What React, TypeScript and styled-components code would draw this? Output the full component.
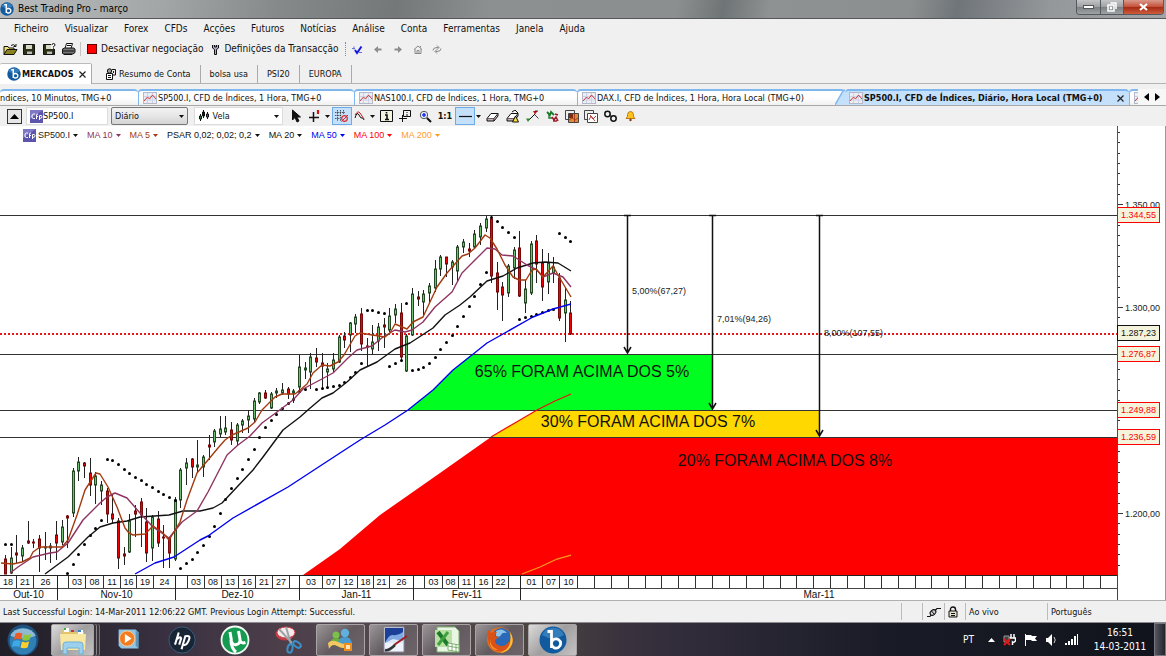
import React from 'react';
import styled, { createGlobalStyle, css } from 'styled-components';

const ui = '"DejaVu Sans Condensed", "DejaVu Sans", "Noto Sans", sans-serif';
const plain = '"Liberation Sans", Arial, sans-serif';

const GlobalStyle = createGlobalStyle`
  * { box-sizing: border-box; }
  body { margin: 0; background: #f0f0f0; font: 10px/12px ${ui}; color: #111; }
  button, input, select { font: inherit; color: inherit; margin: 0; padding: 0; border: 0; background: none; }
  svg { display: block; flex: none; }
`;

/* ---------- window frame ---------- */

const Window = styled.div`
  display: flex;
  flex-direction: column;
  min-height: 100vh;
  overflow: hidden;
  white-space: nowrap;
`;

const TitleBar = styled.header`
  display: flex;
  align-items: center;
  gap: 4px;
  height: 19px;
  background: linear-gradient(100deg, #b9bcbc 0%, #a3a6a6 14%, #868989 24%, #747878 34%, #8c9090 42%, #8b8f8f 58%, #6f7476 62%, #8e9292 66%, #8b8f8f 78%, #70757a 82%, #94989a 90%, #a2a5a6 100%);
  border-bottom: 1px solid #55585a;
`;

const Title = styled.h1`
  flex: 1;
  margin: 0;
  font-size: 10px;
  font-weight: normal;
  color: #000;
`;

const WindowButtons = styled.div`
  display: flex;
  align-self: flex-start;
  height: 15px;
  margin-right: 2px;
  border: 1px solid #55585c;
  border-top: 0;
  border-radius: 0 0 4px 4px;
  overflow: hidden;
`;

const WindowButton = styled.button<{ $close?: boolean }>`
  display: flex;
  align-items: center;
  justify-content: center;
  width: ${p => (p.$close ? 40 : 23)}px;
  background: ${p => (p.$close
    ? 'linear-gradient(#d99a8c, #c4513a 48%, #a52a14 52%, #cf5c3c)'
    : 'linear-gradient(#c2c4c6, #9fa2a4 48%, #7c8082 52%, #a0a3a5)')};
  & + & { border-left: 1px solid #55585c; }
`;

const MenuBar = styled.nav`
  display: flex;
  align-items: center;
  gap: 16px;
  height: 19px;
  padding-left: 14px;
`;

const MenuItem = styled.button``;

const ToolBar = styled.div`
  display: flex;
  align-items: center;
  height: 22px;
  padding-left: 2px;
`;

const ToolButton = styled.button<{ $width?: number; $on?: boolean }>`
  display: flex;
  align-items: center;
  justify-content: center;
  flex: none;
  gap: 4px;
  height: 18px;
  width: ${p => (p.$width ? `${p.$width}px` : 'auto')};
  ${p => p.$on && css`
    background: #c4e0fb;
    border: 1px solid #6cabe8;
  `}
`;

const Group = styled.div<{ $before?: number }>`
  display: flex;
  align-items: center;
  flex: none;
  margin-left: ${p => p.$before ?? 0}px;
`;

const Divider = styled.span<{ $dotted?: boolean }>`
  flex: none;
  width: 1px;
  height: 14px;
  margin: 0 6px 0 2px;
  border-left: 1px ${p => (p.$dotted ? 'dotted #888' : 'solid #c4c4c4')};
`;

/* ---------- workspace tabs ---------- */

const WorkspaceTabs = styled.div`
  display: flex;
  align-items: flex-end;
  height: 24px;
  border-bottom: 1px solid #b4b4b4;
`;

const WorkspaceTab = styled.button<{ $active?: boolean }>`
  display: flex;
  align-items: center;
  gap: 3px;
  height: 18px;
  padding: 0 9px;
  border-right: 1px solid #aaa;
  font-size: 9px;
  ${p => p.$active && css`
    gap: 1px;
    min-width: 92px;
    height: 21px;
    margin: 0 4px -1px 0;
    padding: 0 5px 0 7px;
    background: #fff;
    border-top: 1px solid #bbb;
    border-radius: 2px 2px 0 0;
    font-weight: bold;
  `}
`;

/* ---------- chart tabs ---------- */

const ChartTabs = styled.div`
  display: flex;
  align-items: stretch;
  height: 17px;
  margin-top: 5px;
  border-bottom: 1px solid #a8a8a8;
`;

const TabStrip = styled.div`
  display: flex;
  flex: 1;
  min-width: 0;
  overflow: hidden;
`;

const ChartTab = styled.button<{ $width: number; $active?: boolean; $first?: boolean }>`
  display: flex;
  align-items: center;
  flex: none;
  gap: 1px;
  width: ${p => p.$width}px;
  padding-left: ${p => (p.$first ? 0 : 4)}px;
  border: solid #7fb8ee;
  border-width: 2px 0 0 ${p => (p.$first ? 0 : 1)}px;
  border-radius: 4px 4px 0 0;
  background: linear-gradient(#fff, #fff 50%, #f0f0f0);
  font-size: 9px;
  ${p => p.$active && css`
    padding: 0 5px 0 4px;
    border-left-width: 0;
    background: #c4e0fb;
    font-weight: bold;
  `}
`;

const Slope = styled.svg`
  margin-left: -10px;
`;

const CloseMark = styled.span`
  display: flex;
  margin-left: auto;
`;

const TabScroller = styled.div`
  display: flex;
  align-items: center;
  justify-content: space-evenly;
  width: 28px;
  background: #f7f7f7;
`;

/* ---------- chart toolbar fields ---------- */

const ChartToolBar = styled.div`
  display: flex;
  align-items: center;
  height: 20px;
  padding-left: 7px;
  font-size: 10px;
`;

const CollapseButton = styled.button`
  display: flex;
  align-items: center;
  justify-content: center;
  flex: none;
  width: 15px;
  height: 15px;
  margin-right: 4px;
  border: 1px solid #333;
  background: #e6e6e6;
`;

const Field = styled.label<{ $width: number; $raised?: boolean }>`
  display: flex;
  align-items: center;
  flex: none;
  width: ${p => p.$width}px;
  height: 18px;
  padding: 0 3px;
  font-size: 9px;
  border: 1px solid ${p => (p.$raised ? '#777' : '#dcdcdc')};
  border-radius: ${p => (p.$raised ? 2 : 0)}px;
  background: ${p => (p.$raised ? 'linear-gradient(#f2f2f2, #e6e6e6 50%, #d4d4d4)' : '#fff')};
`;

const FieldInput = styled.input`
  flex: 1;
  min-width: 0;
`;

const FieldSelect = styled.select`
  flex: 1;
  min-width: 0;
  appearance: none;
`;

/* ---------- chart ---------- */

const ChartPanel = styled.main`
  position: relative;
  flex: 1 0 auto;
  border-right: 1px solid #999;
  border-bottom: 1px solid #b0b0b0;
  background: #fff;
  font-family: ${plain};
`;

const Legend = styled.div`
  position: absolute;
  top: 2px;
  left: 23px;
  display: flex;
  align-items: center;
  gap: 9px;
  height: 14px;
  font-size: 9px;
`;

const LegendItem = styled.button<{ $color: string }>`
  display: flex;
  align-items: center;
  gap: 3px;
  color: ${p => p.$color};
`;

const LegendSymbol = styled.span`
  display: flex;
  align-items: center;
  gap: 2px;
`;

const PlotRow = styled.div`
  display: flex;
`;

const Plot = styled.svg`
  flex: 1;
  min-width: 0;
  height: 449px;
`;

const PriceAxis = styled.svg`
  width: 48px;
  height: 449px;
  font-size: 9px;
`;

const TimeAxis = styled.div`
  display: flex;
  height: 25px;
  margin-right: 47px;
  border-top: 1px solid #222;
  border-right: 1px solid #444;
`;

const Month = styled.div<{ $width?: number }>`
  display: flex;
  flex-direction: column;
  flex: ${p => (p.$width ? `0 0 ${p.$width}px` : '1 1 0')};
  min-width: 0;
  & + & { border-left: 1px solid #222; }
`;

const Weeks = styled.div`
  display: flex;
  height: 13px;
  border-bottom: 1px solid #444;
  font-size: 9px;
`;

const Week = styled.span<{ $width?: number }>`
  flex: ${p => (p.$width ? `0 0 ${p.$width}px` : '1 1 0')};
  text-align: center;
  & + & { border-left: 1px solid #333; }
`;

const MonthName = styled.span`
  text-align: center;
`;

/* ---------- status bar and task bar ---------- */

const StatusBar = styled.footer`
  display: flex;
  align-items: center;
  height: 21px;
  font-size: 9px;
`;

const StatusCell = styled.div<{ $width?: number }>`
  display: flex;
  align-items: center;
  flex: ${p => (p.$width ? `0 0 ${p.$width}px` : '1 1 0')};
  height: 17px;
  padding-left: 3px;
  & + & { border-left: 1px solid #bbb; }
`;

const TaskBar = styled.nav`
  display: flex;
  align-items: center;
  height: 34px;
  padding-left: 3px;
  background: linear-gradient(90deg, #201e26 0%, #383040 14%, #4c3f4a 24%, #55484f 34%, #4a4440 46%, #38313e 54%, #2a2735 64%, #191b26 76%, #11131c 100%);
  border-top: 1px solid #8d8a90;
  color: #fff;
`;

const TaskButton = styled.button<{ $state?: 'open' | 'active'; $stacked?: boolean }>`
  display: flex;
  align-items: center;
  justify-content: center;
  flex: none;
  width: 49px;
  height: 32px;
  margin-right: 4px;
  border: 1px solid transparent;
  border-radius: 2px;
  ${p => p.$state && css`
    border-color: #a8a4a6;
    background: ${p.$state === 'active'
      ? 'linear-gradient(135deg, #dcdcdc, #a19ea0 50%, #c4c2c2)'
      : 'linear-gradient(135deg, #9b9598, #625a5e 50%, #6c6468)'};
  `}
  ${p => p.$stacked && css`
    width: 43px;
    margin-right: 10px;
    box-shadow: 2px 0 #3a343c, 3px 0 #8c868c, 5px 0 #3a343c, 6px 0 #787278;
  `}
`;

const StartButton = styled.button`
  margin-right: 9px;
  width: 39px;
  display: flex;
  justify-content: center;
`;

const Tray = styled.div`
  display: flex;
  align-items: center;
  gap: 8px;
  margin-left: auto;
`;

const Language = styled.span`
  margin-right: 6px;
`;

const Clock = styled.time`
  width: 68px;
  line-height: 14px;
  text-align: center;
`;

const ShowDesktop = styled.button`
  width: 12px;
  height: 33px;
  border: 1px solid #77777f;
  background: linear-gradient(90deg, #55565e, #22242c);
`;

/* ---------- icons ---------- */

const Caret = ({ color = '#111' }: { color?: string }) => (
  <svg width="5" height="3" viewBox="0 0 5 3"><path d="M0 0h5L2.500 3z" fill={color} /></svg>
);

const BrandMark = ({ size = 13 }: { size?: number }) => (
  <svg width={size} height={size} viewBox="0 0 28 28">
    <circle cx="14" cy="14" r="13.500" fill="#125a9e" />
    <path d="M3 9a12 12 0 0 1 22 0q-11 7-22 0z" fill="#4a94cf" opacity=".6" />
    <path d="M8.500 5.500h4V22M12.500 17a4.600 4.600 0 1 1 0 1" fill="none" stroke="#fff" strokeWidth="2.800" />
  </svg>
);

const CfdMark = () => (
  <svg width="13" height="13" viewBox="0 0 13 13">
    <path d="M0 0h13v13H0z" fill="#5d54ab" />
    <path d="M0 0h13L0 9z" fill="#7f78c4" />
    <path d="M5 4H3.500Q2 4 2 6v1q0 1.500 1.500 1.500H5M6.500 9V5q0-1 1.500-1M6 6.500h2M9.500 10V5.500q2.500-.7 2.500 1.300t-2.500 1.500" fill="none" stroke="#fff" />
  </svg>
);

const ChartMark = () => (
  <svg width="14" height="12" viewBox="0 0 14 12">
    <rect x=".5" y=".5" width="13" height="11" fill="#eceef6" stroke="#b4b8c8" />
    <path d="M4.500 1v10M9.500 1v10M1 4.500h12M1 8h12" stroke="#cdd2e4" />
    <path d="M1 9l3.500-4 2 2 3-4 3.500 4" fill="none" stroke="#d03838" />
  </svg>
);

const Cross = () => (
  <svg width="7" height="7" viewBox="0 0 7 7"><path d="M.5.5l6 6M6.500.5l-6 6" stroke="#222" strokeWidth="1.200" /></svg>
);

const Art = ({ w = 13, h = 13, children }: { w?: number; h?: number; children: React.ReactNode }) => (
  <svg width={w} height={h} viewBox={`0 0 ${w} ${h}`} fill="none" stroke="#111">{children}</svg>
);

const OpenIcon = () => (
  <Art w={15} h={13}>
    <path d="M1 11.500v-8h4l1 1.500h5v2" fill="#f3e36a" />
    <path d="M1 11.500l3-5h10l-3 5z" fill="#8a8420" />
    <path d="M8 2.500q2.500-2 4.500.5m.5-2v2.500h-2.500" />
  </Art>
);
const SaveIcon = ({ ask }: { ask?: boolean }) => (
  <Art>
    <path d="M.5 1.500h11v10H.5z" fill="#2b2f14" />
    <path d="M3 2h6v4H3z" fill="#d8d8c8" stroke="none" />
    <path d="M4 8.500h5V11H4z" fill="#bbb" stroke="none" />
    {ask && <><path d="M8 0h5v6H8z" fill="#f0f0f0" stroke="none" /><path d="M9 2q0-1.500 1.500-1.500T12 2q0 1-1.500 1.500v1m0 .8v1" /></>}
  </Art>
);
const PrintIcon = () => (
  <Art w={15} h={13}>
    <path d="M4 5.500l1.500-5h6l-1.500 5z" fill="#fff" />
    <path d="M1.500 6l2-1h9l1.500 1v3.500l-2 1.500h-10l-.5-1z" fill="#777" />
    <path d="M2 8h11M3 11.500h8M6 2.500h4" />
  </Art>
);
const WrenchIcon = () => (
  <Art w={9} h={11}><path d="M1.500 1v3l2 1.500v5h2v-5l2-1.500V1M3.500 1v2h2V1" fill="#b7a3c9" /></Art>
);
const CheckIcon = () => (
  <Art w={11} h={11}>
    <path d="M3 6L5 9l4.500-6.500" stroke="#1616e0" strokeWidth="2" />
    <path d="M0 4.500h3M2 2.500v3M7 8.500h3" stroke="#6670dd" />
  </Art>
);
const ArrowIcon = ({ back }: { back?: boolean }) => (
  <Art w={9} h={9}>
    <path d={back ? 'M0 4.500L4 1v2.500h3.500v2H4V8z' : 'M8 4.500L4 1v2.500H.5v2H4V8z'} fill="#8c8c8c" stroke="none" />
  </Art>
);
const HomeIcon = () => (
  <Art w={10} h={9}><path d="M1 4.500l4-3.500 4 3.500M2 4v4.500h6V4M4 8.500v-3h2v3M7.500 2.500V1" stroke="#888" /></Art>
);
const RefreshIcon = () => (
  <Art w={10} h={9}><path d="M1 5.500q0-3 4-3h1.500M5 .5l2 2-2 2M9 3.500q0 3-4 3H3.500M5 4.500l-2 2 2 2" stroke="#888" /></Art>
);
const PeopleIcon = () => (
  <Art w={11} h={12}>
    <circle cx="4.500" cy="3" r="2.200" fill="#999" />
    <path d="M1.500 5.500h6v6h-6zM3 7.500h3M3 9.500h3" fill="#fff" />
    <path d="M7 1.500h3.500V7H8M8.500 3v2" />
  </Art>
);
const CandlesIcon = () => (
  <Art w={12} h={12}>
    <path d="M2.500 4v7M5.500 0v8M9.500 2v7" />
    <path d="M1.500 6h2v3h-2zM8.500 4h2v3h-2z" fill="#2c8a35" />
    <path d="M4.500 2h2v4h-2z" fill="#111" />
  </Art>
);
const CursorIcon = () => (
  <Art w={11} h={14}><path d="M1.500 1v10l2.500-2.500 2 4.500 2-1-2-4h3.500z" fill="#111" /></Art>
);
const CrosshairIcon = () => (
  <Art><path d="M5.500 2v10M1 7.500h10" strokeWidth="1.500" /><path d="M10 0v4" stroke="#d01818" strokeWidth="2.200" /></Art>
);
const GridIcon = () => (
  <Art w={14}>
    <path d="M0 2.500h10M0 5.500h6M0 8.500h5M2.500 0v11M5.500 0v11M8.500 0v4" stroke="#333" strokeWidth=".8" strokeDasharray="1.500 .8" />
    <circle cx="9.500" cy="8.500" r="2.800" stroke="#e02828" strokeWidth="1.200" /><path d="M6.500 11.500l6.500-6.500" stroke="#e02828" />
  </Art>
);
const WaveIcon = () => (
  <Art w={12}><path d="M1 8Q3 1 5 5t3 3 2 2" /><path d="M1 5q3-5 5-2t4 6" stroke="#d02020" /></Art>
);
const InfoIcon = () => (
  <Art w={13} h={12}><path d="M.5.500h12v11H.5z" fill="#f4f4e0" /><path d="M6.500 2v1.500M5 5h2v4M5 9.500h4" strokeWidth="1.600" /></Art>
);
const AddNoteIcon = () => (
  <Art><path d="M4.500.5h7v6h-7zM0 8.500h8M3.500 5v7" /><path d="M8 2v1M8 4v2" /></Art>
);
const ZoomIcon = () => (
  <Art><circle cx="5" cy="5" r="3.700" fill="#e8ecff" stroke="#555" /><path d="M8 8l4 4" strokeWidth="2" /><path d="M3 5h4M5 3v4" stroke="#2233ee" strokeWidth="1.600" /></Art>
);
const LineIcon = () => <Art><path d="M0 6.500h13" strokeWidth="1.200" /></Art>;
const EraserIcon = ({ all }: { all?: boolean }) => (
  <Art>
    <path d="M1 8.500l4-5h7l-4 5z" fill="#fff" /><path d="M1 8.500v2.500h7V8.500M8 11l4-5V3.500" fill="#c9b0b8" />
    {all && <><path d="M6 2l3-2 3 3" /><path d="M9.500 6l3 6h-6z" fill="#ffe23c" /></>}
  </Art>
);
const TrendIcon = () => (
  <Art>
    <path d="M3 10l6-6" />
    <path d="M0 8.500h4.500L2 12z" fill="#2c8a35" stroke="none" />
    <path d="M7 1h4.500L9 4.500z" fill="#c01818" stroke="none" />
    <path d="M9 5l3.500 3.500M9 1l3 0" strokeWidth=".8" />
  </Art>
);
const IndicatorsIcon = () => (
  <Art>
    <path d="M1 2l3 3 1-3 3 3" stroke="#1c7a2c" strokeWidth="1.800" />
    <path d="M3 3v5h3" stroke="#1c7a2c" strokeWidth="1.400" />
    <path d="M6 7l2 3 2-3 2 4M7 11h4M9 4l3 1" stroke="#a01c28" strokeWidth="1.500" />
  </Art>
);
const CopyIcon = ({ image }: { image?: boolean }) => (
  <Art w={14} h={13}>
    <path d="M.5.5h9v9h-9z" fill="#eee" stroke="#444" />
    <path d="M3.500 3.500h10v9h-10z" fill={image ? '#e08a3c' : '#fff'} stroke="#444" />
    {image
      ? <><path d="M4 4h4v4H4z" fill="#7a2c14" stroke="none" /><path d="M4 10l3-2 3 2 3-2M9.500 4v8" stroke="#a8401c" /></>
      : <path d="M5 10l2-4 2 3 3-3M6 5l5 6" stroke="#b83838" />}
  </Art>
);
const LinkIcon = () => <Art><circle cx="3.500" cy="4" r="2.700" strokeWidth="1.500" /><circle cx="9.500" cy="8.500" r="2.700" strokeWidth="1.500" /><path d="M5 5l3 2" /></Art>;
const BellIcon = () => <Art w={11} h={12}><path d="M1 8.500q2-1.500 1.500-4Q3 1.500 5.500 1.500t3 3q-.5 2.500 1.500 4z" fill="#ffc21c" stroke="#b87c14" /><circle cx="5.500" cy="10" r="1.200" fill="#8c3c10" stroke="none" /></Art>;
const Ratio = styled.span`
  font-size: 9px;
  font-weight: bold;
`;
const PlugIcon = () => <Art w={15} h={12}><path d="M1 10.500h3l1.500-2M9 4.500l2-2h4" strokeWidth="1.200" /><ellipse cx="7" cy="6.500" rx="3.200" ry="2.300" fill="#ccc" transform="rotate(-40 7 6.500)" /><path d="M5.500 5l3 3.500" /></Art>;
const LockIcon = () => <Art w={10} h={12}><path d="M2.500 5V3.500Q2.500 1 5 1t2.500 2.500V5" strokeWidth="1.400" /><path d="M1 5h8v6H1zM3 7.500h4M3 9.500h4" fill="#e6e6d0" /></Art>;

/* ---------- task bar pictures ---------- */

const Big = ({ children, size = 30 }: { children: React.ReactNode; size?: number }) => (
  <svg width={size} height={size} viewBox="0 0 30 30">{children}</svg>
);
const StartArt = () => (
  <Big size={32}>
    <circle cx="15" cy="15" r="14.500" fill="#1d4f7c" />
    <circle cx="15" cy="16" r="12.500" fill="#2f7fb4" />
    <path d="M3 11a13 11 0 0 1 24 0q-12 5-24 0z" fill="#a9c9dc" opacity=".8" />
    <path d="M8 9q3-1.500 6.500 0l-1.300 5.500Q10 13 6.500 14.500z" fill="#ee5a24" />
    <path d="M15.800 9.500q3 1.500 7 0L21 15q-3.500 1.500-6.700 0z" fill="#8cc63a" />
    <path d="M6 16q3.500-1.500 6.800 0l-1.300 5.500q-3.500-1.500-7 0z" fill="#3fa9e8" />
    <path d="M14 16.500q3.500 1.500 6.800 0L19.300 22q-3.200 1.500-6.700 0z" fill="#fcd02c" />
  </Big>
);
const FolderArt = () => (
  <Big>
    <path d="M3 5h7l2 2h14v18H3z" fill="#e3c468" />
    <path d="M6 3h5v4H6zM20 5h5v4h-5z" fill="#fff" /><path d="M6 3h2v2H6z" fill="#4a4" /><path d="M13 5h3v2h-3z" fill="#c33" /><path d="M20 5h3v2h-3z" fill="#38c" />
    <path d="M2 9h26l-1 16H3z" fill="#f8e7a0" />
    <path d="M5 29v-9q0-3 3-3h14q3 0 3 3v9h-4v-6H9v6z" fill="#9dd0ec" stroke="#6fb0d8" />
  </Big>
);
const PlayerArt = () => (
  <Big size={27}>
    <path d="M4 4h19l3 3v18H7l-3-3z" fill="#8fc4e4" /><path d="M23 4l3 3v18l-3-3z" fill="#5d93b8" />
    <circle cx="13.500" cy="14" r="8.500" fill="#f47c20" stroke="#fbd0a0" /><path d="M11 9l7.500 5-7.500 5z" fill="#fff" />
  </Big>
);
const HpArt = () => (
  <Big size={28}>
    <circle cx="15" cy="15" r="14" fill="#182535" stroke="#3c6080" />
    <path d="M7.500 20L11.500 7M9.500 14q4.500-3.500 4.500-.5L12 20M14.500 25l4-14q5-1 4.500 2t-2.500 5.500-4 1.500" fill="none" stroke="#fff" strokeWidth="2.200" />
  </Big>
);
const TorrentArt = () => (
  <Big>
    <circle cx="15" cy="15" r="13.500" fill="#159a52" stroke="#f2faf4" strokeWidth="1.800" />
    <path d="M10 7l1.500 9q1 4.500 5 3.500t3.500-5L18.500 6M20 15q1 4 5.500 2.500M11 15q0 8 5 12" fill="none" stroke="#fff" strokeWidth="3" />
  </Big>
);
const SnipArt = () => (
  <Big>
    <ellipse cx="12" cy="9" rx="9.500" ry="6.500" fill="#c43c44" />
    <ellipse cx="13" cy="7.500" rx="9" ry="5.500" fill="#f6eaea" stroke="#d03840" />
    <path d="M6 4l13 14M13 2l5 17" stroke="#9aa2aa" strokeWidth="2" />
    <ellipse cx="17" cy="23.500" rx="2.500" ry="4.200" fill="none" stroke="#3c90c8" strokeWidth="2" transform="rotate(12 17 23.500)" />
    <ellipse cx="24" cy="19.500" rx="4.200" ry="2.500" fill="none" stroke="#3c90c8" strokeWidth="2" transform="rotate(35 24 19.500)" />
  </Big>
);
const MessengerArt = () => (
  <Big>
    <circle cx="10" cy="10" r="3.500" fill="#7cc04c" /><path d="M4 20q0-7 6-7t6 7z" fill="#68b040" />
    <circle cx="19" cy="8" r="4.200" fill="#5fb0dc" /><path d="M12 20q0-8 7-8t7 8z" fill="#4a9cd0" />
    <path d="M2 18q4-4 10-1t12 2l-2 4q-6 1-11-2t-8 3z" fill="#f4c860" /><path d="M18 18h8v8h-8z" fill="#f08c1c" /><path d="M20 20h4v4h-4z" fill="#fde4b4" />
  </Big>
);
const PaintArt = () => (
  <Big>
    <path d="M5 2h20v25H5z" fill="#eef2fa" stroke="#889" /><path d="M6 3h18v15H6z" fill="#1c3f98" />
    <path d="M6 18q4-9 8-8 5 1 10-3v11z" fill="#7fa8e4" /><path d="M6 18l8-4 10 2v2z" fill="#dce8f8" />
    <path d="M15 20l13-9" stroke="#a01c1c" strokeWidth="2" /><path d="M6 25q4 1 10-5" stroke="#333" strokeWidth="2.500" fill="none" />
  </Big>
);
const SheetArt = () => (
  <Big>
    <path d="M5 2h18l4 4v21H5z" fill="#eaf6e4" stroke="#7cb070" /><path d="M3 5h17v17H3z" fill="#b9e0a4" />
    <path d="M6 7l10 13" stroke="#1c7a2c" strokeWidth="4" /><path d="M16 7L6 20" stroke="#3fa040" strokeWidth="3" />
    <path d="M16 18l11 2v7l-11-2zM16 21l11 2M20 19v7M24 19.500v7" fill="#fff" stroke="#7cb070" />
  </Big>
);
const FirefoxArt = () => (
  <Big>
    <circle cx="15" cy="15" r="12.800" fill="#e8701c" />
    <circle cx="16.500" cy="12.500" r="9.500" fill="#2a68b8" />
    <path d="M11 6q6-4 11 2-5-1-6 2t-5 1z" fill="#8cc4ea" />
    <path d="M3 5q2 1 3 3 3-2 6-1-2 2-2 4l4 1-4 3q0 5 6 6 6 0 8-5 2 6-3 9Q9 29 4 19 2 12 3 5z" fill="#d9521a" />
    <path d="M25 7q4 6 2 12-3 8-12 9 9-4 10-10 1-5 0-11z" fill="#fcc034" />
    <path d="M5 14q0 8 8 11-6 0-8-6z" fill="#fba02c" />
  </Big>
);

/* ---------- data ---------- */

const menus = ['Ficheiro', 'Visualizar', 'Forex', 'CFDs', 'Acções', 'Futuros', 'Notícias', 'Análise', 'Conta', 'Ferramentas', 'Janela', 'Ajuda'];

const legend: [string, string][] = [
  ['MA 10', '#8f3460'], ['MA 5', '#a33a10'], ['PSAR 0,02; 0,02; 0,2', '#111'], ['MA 20', '#111'],
  ['MA 50', '#0000f0'], ['MA 100', '#f00'], ['MA 200', '#ff9c1c'],
];

type WeekCell = [string, number];
const months: { name: string; width: number; weeks: WeekCell[] }[] = [
  { name: 'Out-10', width: 57, weeks: [['18', 16], ['21', 17], ['26', 23]] },
  { name: 'Nov-10', width: 118, weeks: [['', 10], ['03', 17], ['08', 18], ['11', 17], ['16', 16], ['19', 17], ['24', 22]] },
  { name: 'Dez-10', width: 124, weeks: [['', 11], ['03', 17], ['08', 17], ['13', 17], ['16', 17], ['21', 17], ['27', 17], ['', 10]] },
  { name: 'Jan-11', width: 114, weeks: [['03', 22], ['07', 17], ['12', 18], ['18', 16], ['21', 16], ['26', 24]] },
  { name: 'Fev-11', width: 107, weeks: [['', 10], ['03', 18], ['08', 16], ['11', 16], ['16', 18], ['22', 16], ['', 12]] },
];
const march: WeekCell[] = [['01', 21], ['07', 17], ['10', 18]];
const emptyWeeks = Array.from({ length: 32 }, (_, i) => i);

/* high, body top, body bottom, low, rising (1) or falling (0), parabolic SAR (0 = none) */
const bars = [
  [429, 433, 448, 448, 0, 418], [421, 432, 447, 448, 1, 418], [409, 427, 429, 438, 0, 0], [419, 422, 430, 435, 1, 0],
  [395, 415, 417, 418, 0, 0], [413, 416, 417, 422, 0, 0], [409, 413, 422, 446, 0, 0], [406, 421, 422, 434, 1, 0],
  [417, 420, 422, 437, 1, 0], [395, 409, 417, 434, 0, 0], [394, 401, 416, 419, 1, 0], [389, 390, 392, 422, 0, 447],
  [342, 345, 387, 391, 1, 438], [331, 336, 345, 355, 1, 428], [336, 337, 340, 352, 0, 418], [332, 347, 359, 370, 0, 409],
  [346, 350, 359, 378, 1, 402], [355, 359, 365, 379, 1, 394], [362, 365, 388, 397, 0, 333], [369, 388, 393, 397, 0, 334],
  [392, 395, 432, 443, 0, 338], [421, 428, 430, 439, 0, 343], [388, 395, 426, 427, 1, 347], [379, 385, 388, 411, 0, 351],
  [372, 376, 389, 421, 0, 354], [382, 396, 427, 436, 0, 358], [389, 391, 422, 435, 1, 361], [385, 393, 417, 421, 0, 365],
  [399, 411, 412, 442, 0, 368], [411, 412, 427, 442, 0, 371], [371, 374, 433, 435, 1, 374], [342, 344, 374, 382, 1, 442],
  [332, 337, 342, 359, 1, 437], [332, 333, 341, 352, 0, 433], [314, 339, 341, 346, 1, 426], [329, 331, 341, 351, 1, 419],
  [309, 319, 321, 334, 0, 410], [303, 305, 316, 321, 1, 400], [290, 303, 308, 311, 1, 387], [290, 302, 306, 309, 1, 373],
  [296, 304, 314, 319, 0, 362], [297, 299, 315, 319, 1, 352], [293, 295, 299, 307, 1, 343], [284, 290, 294, 307, 1, 333],
  [272, 275, 293, 296, 1, 323], [266, 267, 276, 278, 1, 311], [264, 267, 272, 273, 0, 301], [266, 268, 282, 283, 1, 294],
  [262, 265, 267, 272, 1, 288], [257, 264, 267, 269, 1, 282], [261, 263, 268, 273, 0, 277], [263, 265, 267, 277, 1, 273],
  [229, 241, 261, 264, 1, 265], [236, 242, 244, 253, 1, 263], [227, 231, 246, 263, 1, 0], [222, 232, 236, 241, 0, 263],
  [227, 237, 240, 262, 0, 262], [237, 243, 246, 262, 1, 261], [227, 234, 243, 247, 1, 260], [209, 211, 236, 237, 1, 259],
  [206, 210, 214, 222, 0, 256], [196, 197, 209, 226, 1, 251], [188, 191, 198, 207, 1, 246], [182, 188, 218, 225, 0, 237],
  [212, 220, 221, 240, 0, 184], [199, 216, 223, 229, 1, 184], [197, 201, 215, 225, 1, 186], [192, 199, 201, 222, 0, 187],
  [182, 190, 204, 206, 1, 240], [178, 183, 189, 197, 1, 237], [177, 187, 231, 234, 0, 234], [208, 210, 245, 246, 1, 177],
  [162, 168, 209, 210, 1, 244], [165, 171, 173, 180, 0, 243], [164, 168, 176, 190, 1, 241], [157, 160, 167, 177, 1, 237],
  [134, 143, 162, 166, 1, 231], [129, 131, 143, 150, 1, 223], [131, 131, 138, 151, 0, 216], [134, 136, 141, 159, 1, 209],
  [119, 121, 145, 156, 1, 200], [113, 116, 121, 127, 1, 190], [117, 123, 125, 131, 0, 180], [104, 108, 121, 122, 1, 170],
  [97, 100, 111, 119, 1, 158], [90, 93, 102, 106, 1, 146], [90, 93, 150, 157, 0, 91], [136, 147, 166, 184, 0, 95],
  [156, 161, 169, 195, 0, 101], [138, 140, 167, 171, 1, 106], [121, 124, 142, 153, 1, 111], [105, 122, 170, 171, 0, 193],
  [154, 163, 177, 187, 1, 191], [115, 118, 167, 169, 1, 190], [109, 115, 138, 157, 0, 188], [123, 137, 161, 175, 0, 186],
  [127, 137, 156, 168, 1, 184], [131, 141, 147, 157, 1, 183], [147, 152, 192, 195, 0, 107], [161, 174, 187, 216, 1, 111],
  [175, 187, 208, 209, 0, 115],
];
const barX = (i: number) => 5 + i * 5.653;

const averages = [
  { color: '#0000f0', points: '135,448 155,437 174,431 200,414 208,410 233,392 288,361 340,327 360,314 385,299 408,284 433,264 453,244 472,229 487,217 503,208 533,191 553,183 571,178' },
  { color: '#111', points: '45,448 68,431 88,411 100,401 113,397 127,395 140,391 169,389 183,385 200,385 213,382 222,377 237,361 253,344 263,331 283,304 300,291 309,283 322,272 333,267 347,256 360,244 377,236 395,223 410,217 433,202 445,189 460,179 470,171 487,155 503,150 517,142 533,137 545,136 558,137 571,145' },
  { color: '#8f3460', points: '10,447 18,441 33,431 50,427 57,426 68,417 83,394 100,377 107,371 115,367 127,372 140,387 153,401 169,412 182,396 197,385 208,366 227,329 238,319 250,310 262,297 277,286 293,274 303,263 320,254 333,247 348,232 357,224 372,220 383,211 395,204 405,206 412,204 423,196 435,181 452,166 462,147 473,136 487,122 495,123 502,129 513,130 527,139 537,144 543,151 553,147 563,151 571,161' },
  { color: '#a33a10', points: '1,437 13,438 22,436 30,432 33,426 40,421 62,421 68,414 77,389 85,364 96,347 100,348 108,361 117,381 125,402 129,407 133,409 145,408 153,400 162,406 169,414 180,396 187,374 197,347 202,341 208,334 218,322 225,314 232,309 248,302 255,296 262,284 275,271 282,268 295,268 300,264 307,258 313,247 322,239 330,240 338,236 344,229 355,210 360,207 385,211 390,207 395,198 407,203 413,196 423,191 430,176 437,161 447,147 462,130 468,128 475,122 485,109 490,112 497,123 505,139 513,151 519,154 526,154 532,144 536,143 543,151 553,140 558,149 571,171' },
];

const levels = [89, 228, 284, 311];
const drops = [
  { x: 627, to: 228, label: '5,00%(67,27)', at: 168 },
  { x: 712, to: 284, label: '7,01%(94,26)', at: 196 },
  { x: 819, to: 311, label: '8,00%(107,55)', at: 210 },
];
const tags: [number, string, string][] = [
  [89, '1.344,55', '#f00'], [207, '1.287,23', '#111'], [228, '1.276,87', '#f00'], [284, '1.249,88', '#f00'], [311, '1.236,59', '#f00'],
];
const scale: [number, string][] = [[78, '1.350,00'], [181, '1.300,00'], [387, '1.200,00']];

/* ---------- sections ---------- */

const PricePlot = () => (
  <Plot role="img" aria-label="SP500.I">
    <path d="M408 284L433 264L453 244L472 228H712V284z" fill="#00ff21" />
    <path d="M491 311L537 284H819V311z" fill="#ffd800" />
    <path d="M303 449L323 435L340 423L360 406L380 389L410 368L440 347L491 311H820V449z" fill="#f00" />
    <rect x="819" y="311" width="100%" height="138" fill="#f00" />
    {levels.map(y => <line key={y} x1="0" x2="100%" y1={y + 0.5} y2={y + 0.5} stroke="#333" />)}
    <line x1="0" x2="100%" y1="208" y2="208" stroke="#e81818" strokeWidth="2" strokeDasharray="2 2" />
    {bars.map(([high, top, bottom, low, up, sar], i) => {
      const x = Math.round(barX(i)) + 0.5;
      return (
        <g key={i}>
          <line x1={x} x2={x} y1={high} y2={low} stroke="#222" />
          <rect x={x - 1} y={top} width="2" height={Math.max(bottom - top, 1)} fill={up ? '#6fc070' : '#f00000'} stroke={up ? '#244a24' : '#7a0808'} />
          {sar > 0 && <circle cx={x} cy={sar + 0.5} r="1.500" fill="#000" />}
        </g>
      );
    })}
    {averages.map(line => (
      <polyline key={line.color} points={line.points} fill="none" stroke={line.color} strokeWidth="1.400" strokeLinejoin="round" />
    ))}
    <path d="M491 311L520 294L537 284L555 275L571 268" fill="none" stroke="#f01010" strokeWidth="1.300" />
    <path d="M522 448L540 441L557 433L571 429" fill="none" stroke="#ff9c1c" strokeWidth="1.300" />
    {drops.map(d => (
      <g key={d.x}>
        <path d={`M${d.x - 3} 89.500h7M${d.x + 0.5} 89V${d.to - 1}M${d.x - 3} ${d.to - 7}l3.500 6l3.500-6`} fill="none" stroke="#111" strokeWidth="1.500" />
        <text x={d.x + 5} y={d.at} fontSize="9" fill="#222">{d.label}</text>
      </g>
    ))}
    <g fontSize="16" textAnchor="middle" fill="#111">
      <text x="582" y="251">65% FORAM ACIMA DOS 5%</text>
      <text x="648" y="301">30% FORAM ACIMA DOS 7%</text>
      <text x="785" y="340">20% FORAM ACIMA DOS 8%</text>
    </g>
  </Plot>
);

const PriceScale = () => (
  <PriceAxis viewBox="0 0 48 449">
    <path d="M.5 0V449" stroke="#555" />
    <path d={Array.from({ length: 44 }, (_, i) => `M1 ${Math.round(6 + i * 10.3) + 0.5}h2`).join('')} stroke="#333" />
    {scale.map(([y, label]) => (
      <g key={label}>
        <path d={`M1 ${y + 0.5}h5`} stroke="#333" />
        <text x="8" y={y + 4} fill="#222">{label}</text>
      </g>
    ))}
    {tags.map(([y, label, color]) => (
      <g key={label}>
        <rect x=".5" y={y - 7.5} width="42" height="15" fill="#f4f4dc" stroke={color} />
        <text x="4" y={y + 3} fill={color}>{label}</text>
      </g>
    ))}
  </PriceAxis>
);

const DateScale = () => (
  <TimeAxis>
    {months.map(m => (
      <Month key={m.name} $width={m.width}>
        <Weeks>{m.weeks.map(([day, width], i) => <Week key={i} $width={i < m.weeks.length - 1 ? width : undefined}>{day}</Week>)}</Weeks>
        <MonthName>{m.name}</MonthName>
      </Month>
    ))}
    <Month>
      <Weeks>
        {march.map(([day, width]) => <Week key={day} $width={width}>{day}</Week>)}
        {emptyWeeks.map(i => <Week key={i} />)}
      </Weeks>
      <MonthName>Mar-11</MonthName>
    </Month>
  </TimeAxis>
);

export default function App() {
  return (
    <Window>
      <GlobalStyle />
      <TitleBar>
        <BrandMark size={14} />
        <Title>Best Trading Pro - março</Title>
        <WindowButtons>
          <WindowButton aria-label="Minimizar"><svg width="11" height="5"><rect x=".5" y=".5" width="10" height="3" fill="#fff" stroke="#555" /></svg></WindowButton>
          <WindowButton aria-label="Restaurar"><svg width="10" height="10" fill="none" stroke="#fff" strokeWidth="1.500"><path d="M3.500 1h5.500v6M1 3h6v6H1zM3.500 5.500h1v1h-1z" /></svg></WindowButton>
          <WindowButton $close aria-label="Fechar"><svg width="9" height="8"><path d="M1 1l7 6M8 1L1 7" stroke="#fff" strokeWidth="2.200" /></svg></WindowButton>
        </WindowButtons>
      </TitleBar>

      <MenuBar>{menus.map(m => <MenuItem key={m}>{m}</MenuItem>)}</MenuBar>

      <ToolBar>
        <ToolButton $width={16} aria-label="Abrir"><OpenIcon /></ToolButton>
        <ToolButton $width={22} aria-label="Guardar"><SaveIcon /></ToolButton>
        <ToolButton $width={18} aria-label="Guardar como"><SaveIcon ask /></ToolButton>
        <ToolButton $width={20} aria-label="Imprimir"><PrintIcon /></ToolButton>
        <Divider />
        <ToolButton><svg width="10" height="10"><rect x=".5" y=".5" width="9" height="9" fill="#f00" stroke="#600" /></svg>Desactivar negociação</ToolButton>
        <Group $before={8}><ToolButton><WrenchIcon />Definições da Transacção</ToolButton></Group>
        <Group $before={5}><Divider $dotted /></Group>
        <ToolButton $width={11} aria-label="Validar"><CheckIcon /></ToolButton>
        <Group $before={5}>
          <ToolButton $width={20} aria-label="Anterior"><ArrowIcon back /></ToolButton>
          <ToolButton $width={20} aria-label="Seguinte"><ArrowIcon /></ToolButton>
          <ToolButton $width={20} aria-label="Início"><HomeIcon /></ToolButton>
          <ToolButton $width={18} aria-label="Actualizar"><RefreshIcon /></ToolButton>
        </Group>
      </ToolBar>

      <WorkspaceTabs>
        <WorkspaceTab $active><BrandMark size={14} />MERCADOS<CloseMark><Cross /></CloseMark></WorkspaceTab>
        <WorkspaceTab><PeopleIcon />Resumo de Conta</WorkspaceTab>
        <WorkspaceTab>bolsa usa</WorkspaceTab>
        <WorkspaceTab>PSI20</WorkspaceTab>
        <WorkspaceTab>EUROPA</WorkspaceTab>
      </WorkspaceTabs>

      <ChartTabs>
        <TabStrip>
          <ChartTab $width={138} $first>ndices, 10 Minutos, TMG+0</ChartTab>
          <ChartTab $width={216}><ChartMark />SP500.I, CFD de Índices, 1 Hora, TMG+0</ChartTab>
          <ChartTab $width={223}><ChartMark />NAS100.I, CFD de Índices, 1 Hora, TMG+0</ChartTab>
          <ChartTab $width={268}><ChartMark />DAX.I, CFD de Índices, 1 Hora, Hora Local (TMG+0)</ChartTab>
          <Slope width="10" height="16" viewBox="0 0 10 16"><path d="M0 16L8 2q1-1 2-1v15z" fill="#c4e0fb" /><path d="M0 16L8 2q1-1 2-1" fill="none" stroke="#7fb8ee" strokeWidth="1.500" /></Slope>
          <ChartTab $width={284} $active><ChartMark />SP500.I, CFD de Índices, Diário, Hora Local (TMG+0)<CloseMark><Cross /></CloseMark></ChartTab>
          <ChartTab $width={40}><ChartMark /></ChartTab>
        </TabStrip>
        <TabScroller>
          <button aria-label="Separador anterior"><svg width="5" height="8"><path d="M5 0v8L0 4z" /></svg></button>
          <button aria-label="Separador seguinte"><svg width="5" height="8"><path d="M0 0v8l5-4z" /></svg></button>
        </TabScroller>
      </ChartTabs>

      <ChartToolBar>
        <CollapseButton aria-label="Recolher"><svg width="9" height="5"><path d="M0 5h9L4.500 0z" /></svg></CollapseButton>
        <Field $width={82}><CfdMark /><FieldInput aria-label="Símbolo" defaultValue="SP500.I" /></Field>
        <Group $before={3}>
          <Field $width={77} $raised>
            <FieldSelect aria-label="Período"><option>Diário</option></FieldSelect><Caret />
          </Field>
        </Group>
        <Group $before={6}>
          <Field $width={89}><CandlesIcon />
            <FieldSelect aria-label="Tipo de gráfico"><option>&nbsp;Vela</option></FieldSelect><Caret />
          </Field>
        </Group>
        <Group $before={3}>
          <ToolButton $width={20} aria-label="Seleccionar"><CursorIcon /></ToolButton>
          <ToolButton $width={26} aria-label="Mira"><CrosshairIcon /><Caret /></ToolButton>
          <ToolButton $width={20} $on aria-label="Grelha"><GridIcon /></ToolButton>
          <ToolButton $width={24} aria-label="Curvas"><WaveIcon /><Caret /></ToolButton>
          <ToolButton $width={20} aria-label="Informação"><InfoIcon /></ToolButton>
          <ToolButton $width={19} aria-label="Nota"><AddNoteIcon /></ToolButton>
          <ToolButton $width={20} aria-label="Ampliar"><ZoomIcon /></ToolButton>
          <ToolButton $width={20}><Ratio>1:1</Ratio></ToolButton>
          <ToolButton $width={20} $on aria-label="Linha"><LineIcon /></ToolButton>
          <ToolButton $width={7} aria-label="Mais linhas"><Caret /></ToolButton>
          <ToolButton $width={20} aria-label="Apagar"><EraserIcon /></ToolButton>
          <ToolButton $width={20} aria-label="Apagar tudo"><EraserIcon all /></ToolButton>
          <ToolButton $width={20} aria-label="Tendência"><TrendIcon /></ToolButton>
          <ToolButton $width={20} aria-label="Indicadores"><IndicatorsIcon /></ToolButton>
          <ToolButton $width={19} aria-label="Copiar imagem"><CopyIcon image /></ToolButton>
          <ToolButton $width={20} aria-label="Copiar gráfico"><CopyIcon /></ToolButton>
          <ToolButton $width={19} aria-label="Ligar"><LinkIcon /></ToolButton>
          <ToolButton $width={20} aria-label="Alerta"><BellIcon /></ToolButton>
        </Group>
      </ChartToolBar>

      <ChartPanel>
        <PlotRow>
          <PricePlot />
          <PriceScale />
        </PlotRow>
        <DateScale />
        <Legend>
          <LegendItem $color="#222"><LegendSymbol><CfdMark />SP500.I</LegendSymbol><Caret /></LegendItem>
          {legend.map(([label, color]) => <LegendItem key={label} $color={color}>{label}<Caret color={color} /></LegendItem>)}
        </Legend>
      </ChartPanel>

      <StatusBar>
        <StatusCell>Last Successful Login: 14-Mar-2011 12:06:22 GMT. Previous Login Attempt: Successful.</StatusCell>
        <StatusCell $width={21} />
        <StatusCell $width={22}><PlugIcon /></StatusCell>
        <StatusCell $width={21}><LockIcon /></StatusCell>
        <StatusCell $width={82}>Ao vivo</StatusCell>
        <StatusCell $width={119}>Português</StatusCell>
      </StatusBar>

      <TaskBar>
        <StartButton aria-label="Iniciar"><StartArt /></StartButton>
        <TaskButton $state="active" $stacked aria-label="Explorador"><FolderArt /></TaskButton>
        <TaskButton aria-label="Media Player"><PlayerArt /></TaskButton>
        <TaskButton aria-label="HP"><HpArt /></TaskButton>
        <TaskButton aria-label="Torrent"><TorrentArt /></TaskButton>
        <TaskButton aria-label="Recorte"><SnipArt /></TaskButton>
        <TaskButton $state="open" aria-label="Messenger"><MessengerArt /></TaskButton>
        <TaskButton $state="open" aria-label="Pintura"><PaintArt /></TaskButton>
        <TaskButton $state="open" aria-label="Folha de cálculo"><SheetArt /></TaskButton>
        <TaskButton $state="open" aria-label="Navegador"><FirefoxArt /></TaskButton>
        <TaskButton $state="active" aria-label="Best Trading Pro"><BrandMark size={28} /></TaskButton>
        <Tray>
          <Language>PT</Language>
          <svg width="7" height="4"><path d="M0 4h7L3.500 0z" fill="#fff" /></svg>
          <svg width="13" height="13"><path d="M1 3h5v6H1z" fill="#444" stroke="#999" /><path d="M8 1v4M11 1v4M6.500 5h6v3q-2 2-3 1v3" fill="none" stroke="#fff" strokeWidth="1.500" /><path d="M1 6l6 6M7 6l-6 6" stroke="#e01818" strokeWidth="2" /></svg>
          <svg width="13" height="13"><path d="M1.500 1v12" stroke="#fff" /><path d="M2 2h5l1 1h5l-2 2.500L13 8H8L7 7H2z" fill="#fff" /></svg>
          <svg width="12" height="12"><path d="M1 4h2l4-4v12L3 8H1z" fill="#fff" /><path d="M9 3q2.500 3 0 6" fill="none" stroke="#ccc" /></svg>
          <svg width="13" height="11"><path d="M0 9h2v2H0zM3 7h2v4H3zM6 5h2v6H6zM9 2h2v9H9zM12 0h1v11h-1z" fill="#fff" /></svg>
          <Clock>16:51<br />14-03-2011</Clock>
        </Tray>
        <ShowDesktop aria-label="Mostrar ambiente de trabalho" />
      </TaskBar>
    </Window>
  );
}
